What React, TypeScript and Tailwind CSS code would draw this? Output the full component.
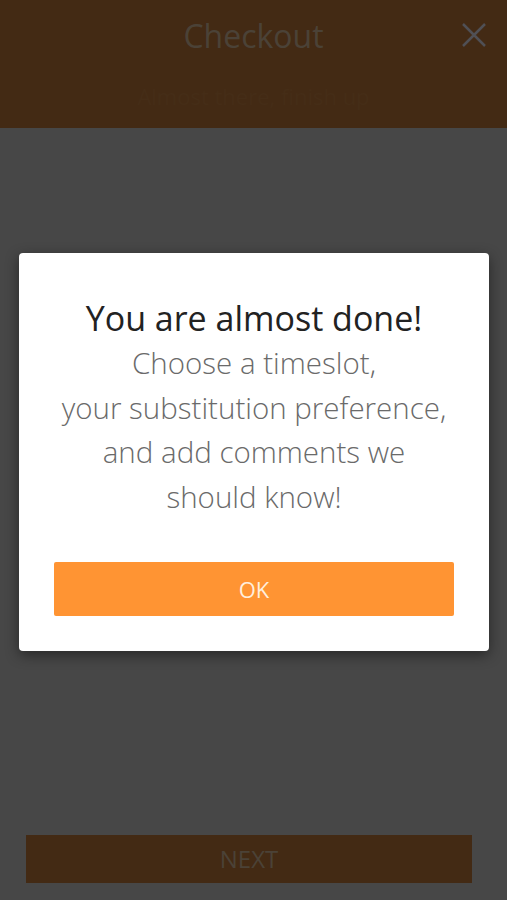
export default function App() {
  return (
    <div className="relative h-[900px] w-[507px] overflow-hidden bg-[#474747]" style={{ fontFamily: '"Open Sans", "Noto Sans", sans-serif' }}>
      <header className="relative h-[128px] bg-[#432a14]">
        <h1 className="pt-[12px] text-center text-[32px] leading-[48px] text-[#4b4237]">Checkout</h1>
        <p className="mt-[20px] text-center text-[22px] text-[#452d17]">Almost there, finish up</p>
        <button className="absolute right-[20px] top-[22px] text-[#505055]">
          <svg width="26" height="26" viewBox="0 0 26 26" fill="none" stroke="currentColor" strokeWidth="2.5">
            <path d="M2 2 L24 24 M24 2 L2 24" />
          </svg>
        </button>
      </header>

      <div className="flex h-[772px] flex-col justify-end pl-[26px] pr-[35px] pb-[17px]">
        <button className="h-[48px] w-full bg-[#432a14] text-[24px] text-[#4b4237]">NEXT</button>
      </div>

      <div className="absolute left-[19px] top-[253px] w-[470px] rounded-[4px] bg-white px-[30px] pt-[43px] pb-[35px] text-center shadow-[0_4px_14px_rgba(0,0,0,0.45)]">
        <h2 className="text-[34px] leading-[45px] text-[#222]">You are almost done!</h2>
        <p className="text-[29.5px] font-light leading-[44.5px] text-[#6a6a6a]">
          Choose a timeslot,
          <br />
          your substitution preference,
          <br />
          and add comments we
          <br />
          should know!
        </p>
        <button className="mx-[5px] mt-[43px] h-[54px] w-[400px] rounded-[2px] bg-[#ff9433] text-[22px] text-[#ffeedd]">OK</button>
      </div>
    </div>
  );
}
